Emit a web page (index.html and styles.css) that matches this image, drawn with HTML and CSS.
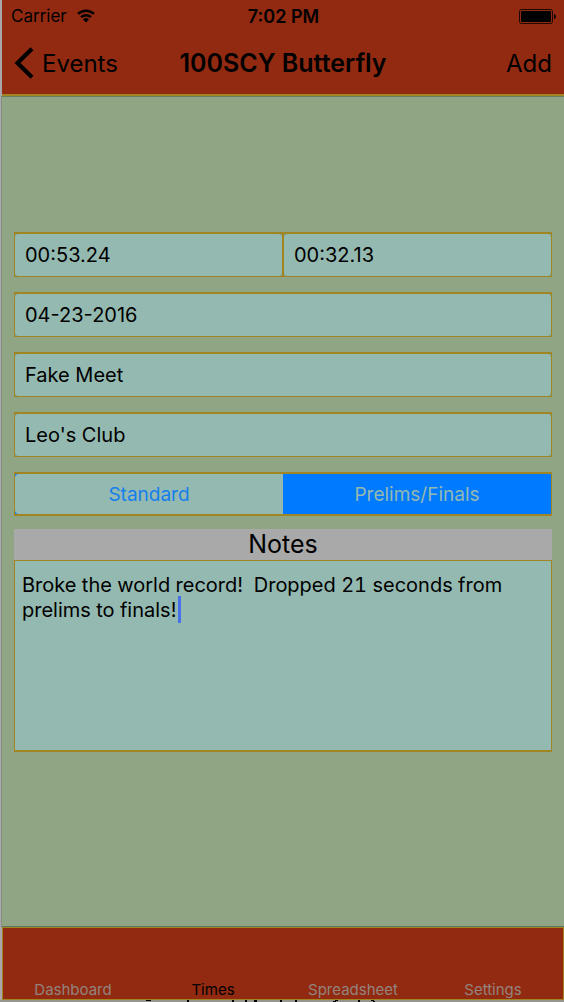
FILE: index.html
```html
<!DOCTYPE html>
<html lang="en">
<head>
<meta charset="utf-8">
<meta name="viewport" content="width=device-width, initial-scale=1">
<title>100SCY Butterfly</title>
<link rel="stylesheet" href="styles.css">
</head>
<body>
<div class="app">
  <header class="header">
    <div class="status">
      <div class="carrier">
        <span>Carrier</span>
        <svg class="wifi" viewBox="0 0 18 14" aria-hidden="true">
          <path d="M0.2 4.1A12.6 12.6 0 0 1 17.8 4.1L16.100 5.800A10.200 10.200 0 0 0 1.900 5.800Z"/>
          <path d="M3.2 7.300A8.3 8.3 0 0 1 14.8 7.300L13.100 9A6 6 0 0 0 4.900 9Z"/>
          <path d="M6 10.4A4.3 4.3 0 0 1 12 10.4L9 13.4Z"/>
        </svg>
      </div>
      <div class="clock">7:02 PM</div>
      <svg class="battery" viewBox="0 0 37 15" aria-hidden="true">
        <rect x="0.5" y="0.5" width="33" height="14" rx="2" fill="none" stroke="#000" stroke-opacity=".8"/>
        <rect x="2" y="2" width="30" height="11" rx="1"/>
        <path d="M35 5Q37 5.500 37 7.500T35 10Z"/>
      </svg>
    </div>
    <nav class="nav">
      <button class="back" type="button">
        <svg class="chevron" viewBox="0 0 20 32" aria-hidden="true"><path d="M18 1.800L3.500 16L18 30.200" fill="none" stroke="#000" stroke-width="4.200"/></svg>
        <span>Events</span>
      </button>
      <h1 class="title">100SCY Butterfly</h1>
      <button class="add" type="button">Add</button>
    </nav>
  </header>

  <main class="content">
    <form class="form">
      <div class="row">
        <div class="field"><input class="input" type="text" value="00:53.24" aria-label="Finals time"></div>
        <div class="field"><input class="input" type="text" value="00:32.13" aria-label="Prelims time"></div>
      </div>
      <div class="field"><input class="input" type="text" value="04-23-2016" aria-label="Date"></div>
      <div class="field"><input class="input" type="text" value="Fake Meet" aria-label="Meet"></div>
      <div class="field"><input class="input" type="text" value="Leo's Club" aria-label="Club"></div>
      <div class="segments">
        <button class="segment" type="button" aria-pressed="false">Standard</button>
        <button class="segment selected" type="button" aria-pressed="true">Prelims/Finals</button>
      </div>
      <div class="notes">
        <label class="notes-label" for="notes">Notes</label>
        <div class="notes-box">
          <textarea class="notes-text" id="notes" spellcheck="false">Broke the world record!  Dropped 21 seconds from prelims to finals!</textarea>
          <span class="caret"></span>
        </div>
      </div>
    </form>
  </main>

  <nav class="tabs" aria-label="Sections">
    <a class="tab" href="#dashboard">Dashboard</a>
    <a class="tab current" href="#times" aria-current="page">Times</a>
    <a class="tab" href="#spreadsheet">Spreadsheet</a>
    <a class="tab" href="#settings">Settings</a>
  </nav>
</div>
<svg class="under" viewBox="0 0 564 2" preserveAspectRatio="none" aria-hidden="true">
  <path d="M146 0h5v1h-5zM187 0h2v2h-2zM232 0h2v2h-2zM245 0h2v2h-2zM254 0h3v2h-3zM280 0h2v2h-2zM295 0h2v2h-2zM335 0h3v1h-3zM333 1h3v1h-3zM358 0h2v2h-2zM371 0h3v1h-3zM373 1h2v1h-2z"/>
</svg>
</body>
</html>
```
FILE: styles.css
```css
* {
  box-sizing: border-box;
}

body {
  margin: 0;
  min-height: 100vh;
  display: flex;
  flex-direction: column;
  background: #96968f;
  color: #000;
  font-family: Inter, "Liberation Sans", sans-serif;
}

button,
input,
textarea {
  margin: 0;
  padding: 0;
  border: 0;
  color: inherit;
  font: inherit;
  outline: 0;
}

button {
  background: none;
}

.app {
  flex: 1;
  display: flex;
  flex-direction: column;
  border-left: 2px solid #a9a7ab;
  background: #90a584;
}

.header {
  background: #922a12;
  border-bottom: 2px solid #a08522;
}

.status {
  height: 32px;
  padding: 0 8px 0 9px;
  display: grid;
  grid-template-columns: 1fr auto 1fr;
  align-items: center;
  font-size: 17px;
}

.carrier {
  display: flex;
  align-items: center;
  gap: 10px;
}

.wifi {
  width: 18px;
  height: 14px;
}

.clock {
  font-size: 18px;
  font-weight: 600;
}

.battery {
  width: 37px;
  height: 15px;
  justify-self: end;
}

.nav {
  height: 62px;
  padding: 0 12px;
  display: grid;
  grid-template-columns: 1fr auto 1fr;
  align-items: center;
  font-size: 24px;
}

.back {
  display: flex;
  align-items: center;
  gap: 8px;
}

.chevron {
  width: 20px;
  height: 32px;
}

.title {
  margin: 0;
  font-size: 25px;
  font-weight: 600;
}

.add {
  justify-self: end;
}

.content {
  flex: 1;
  padding: 135px 12px 0;
  border-top: 1px solid #6b7a62;
  border-left: 1px solid #858f7f;
  margin-left: -1px;
}

.form {
  display: flex;
  flex-direction: column;
  gap: 15px;
}

.row {
  display: grid;
  grid-template-columns: 1fr 1fr;
}

.field {
  height: 45px;
  border: 1px solid #a08522;
  border-top-width: 2px;
  background: #7f9c84;
}

.input {
  display: block;
  width: 100%;
  height: 100%;
  padding: 0 10px;
  border-radius: 4px;
  background: #94b9b0;
  font-size: 20px;
}

.segments {
  height: 44px;
  display: grid;
  grid-template-columns: 1fr 1fr;
  border: 1px solid #a08522;
  border-width: 2px 1px;
  background: #007aff;
}

.segment {
  background: #94b9b0;
  border-radius: 4px 0 0 4px;
  color: #147fed;
  font-size: 19px;
}

.segment.selected {
  background: #007aff;
  border-radius: 0;
  color: #94b9b0;
}

.notes {
  display: flex;
  flex-direction: column;
  margin-top: -2px;
}

.notes-label {
  background: #a9a9a9;
  font-size: 25px;
  line-height: 31px;
  text-align: center;
}

.notes-box {
  position: relative;
}

.notes-text {
  display: block;
  width: 100%;
  height: 192px;
  padding: 12px 7px;
  border: 1px solid #a08522;
  border-bottom-width: 2px;
  background: #94b9b0;
  font-size: 20px;
  font-variant-numeric: tabular-nums;
  line-height: 25px;
  resize: none;
}

.caret {
  position: absolute;
  left: 164px;
  top: 36px;
  width: 3px;
  height: 27px;
  background: #4870ec;
}

.tabs {
  height: 73px;
  display: grid;
  grid-template-columns: repeat(4, 1fr);
  align-items: end;
  border: 1px solid #a08522;
  background: #922a12;
  box-shadow: 0 -1px #5f7560;
}

.tab {
  color: #92847d;
  font-size: 15px;
  line-height: 18px;
  text-align: center;
  text-decoration: none;
}

.tab.current {
  color: #000;
}

.under {
  display: block;
  width: 100%;
  height: 2px;
}
```
